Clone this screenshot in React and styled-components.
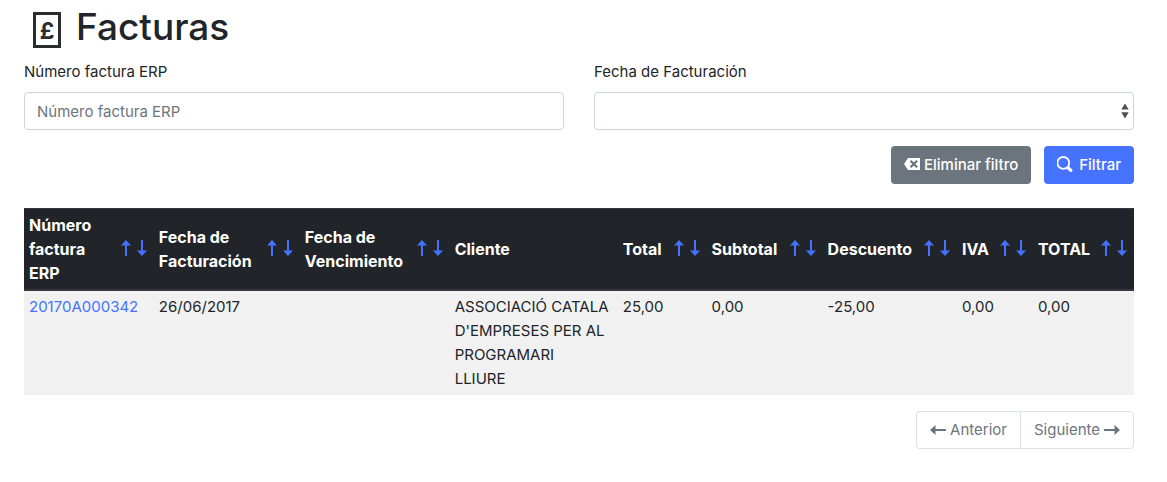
import React from 'react';

import styled, { createGlobalStyle } from 'styled-components';

const GlobalStyle = createGlobalStyle`
  *, *::before, *::after {
    box-sizing: border-box;
  }
  body {
    margin: 0;
    background: #fff;
    color: #212529;
    font-family: Inter, "Liberation Sans", sans-serif;
    font-size: 15px;
    line-height: 24px;
  }
  button, input, select {
    font: inherit;
    margin: 0;
  }
`;

const Page = styled.main`
  display: flex;
  flex-flow: column nowrap;
  padding: 3px 33px 32px 24px;
`;
const Header = styled.header`
  display: flex;
  align-items: center;
  gap: 15px;
  padding-left: 9px;
  & > svg {
    margin-top: 6px;
  }
`;
const Title = styled.h1`
  margin: 0;
  font-size: 37px;
  font-weight: 500;
  line-height: 48px;
`;
const Filters = styled.form`
  display: grid;
  grid-template-columns: 1fr 1fr;
  gap: 16px 30px;
  padding-top: 9px;
`;
const Field = styled.div`
  display: flex;
  flex-flow: column nowrap;
  gap: 8px;
`;
const Input = styled.input`
  width: 100%;
  height: 38px;
  padding: 6px 12px;
  background: #fff;
  border: 1px solid #ced4da;
  border-radius: 4px;
  color: #495057;
  &::placeholder {
    color: #6c757d;
    opacity: 1;
  }
`;
const SelectBox = styled.div`
  display: grid;
  align-items: center;
  & > * {
    grid-area: 1 / 1;
  }
  & > svg {
    justify-self: end;
    margin-right: 5px;
    pointer-events: none;
  }
`;
const Select = styled.select`
  appearance: none;
  width: 100%;
  height: 38px;
  padding: 6px 28px 6px 12px;
  background: #fff;
  border: 1px solid #ced4da;
  border-radius: 4px;
  color: #495057;
`;
const Actions = styled.div`
  grid-column: 1 / -1;
  display: flex;
  justify-content: flex-end;
  gap: 13px;
`;
const Button = styled.button`
  display: flex;
  align-items: center;
  gap: ${({ $gap }) => $gap};
  height: 38px;
  padding: 0 13px;
  background: ${({ $color }) => $color};
  border: 0;
  border-radius: 4px;
  color: #fff;
  font-weight: 500;
  cursor: pointer;
`;
const Table = styled.table`
  width: 100%;
  margin-top: 24px;
  border-collapse: separate;
  border-spacing: 0;
  table-layout: fixed;
`;
const Col = styled.col`
  width: ${({ $width }) => $width};
`;
const Th = styled.th`
  padding: 4px 4px 4px 5px;
  background: #212529;
  border-top: 1px solid #32383e;
  border-bottom: 2px solid #32383e;
  color: #fff;
  font-size: 16px;
  font-weight: 700;
  text-align: left;
`;
const Heading = styled.div`
  display: flex;
  align-items: center;
  justify-content: space-between;
  gap: 8px;
`;
const Sort = styled.span`
  display: flex;
  flex: none;
  padding-bottom: 2px;
`;
const SortLink = styled.a`
  display: flex;
  color: #4573ff;
`;
const Td = styled.td`
  padding: 4px 4px 4px 5px;
  background: #f1f1f1;
  vertical-align: top;
  white-space: pre-line;
`;
const Link = styled.a`
  color: #4573ff;
  text-decoration: none;
`;
const Pagination = styled.nav`
  display: flex;
  justify-content: flex-end;
  margin-top: 16px;
`;
const PageButton = styled.button`
  display: flex;
  align-items: center;
  gap: 4px;
  height: 38px;
  padding: 0 13px;
  background: #fff;
  border: 1px solid #dee2e6;
  color: #6c757d;
  &:first-child {
    border-right: 0;
    border-radius: 4px 0 0 4px;
  }
  &:last-child {
    border-radius: 0 4px 4px 0;
  }
`;

const InvoiceIcon = () => (
  <svg width="28" height="36" viewBox="0 0 28 36" aria-hidden="true">
    <rect x="1.5" y="1.5" width="25" height="33" fill="none" stroke="#2b2d30" strokeWidth="3" />
    <text x="14" y="26.5" textAnchor="middle" fontSize="23" fontWeight="700" fill="#2b2d30">£</text>
  </svg>
);

const SelectArrows = () => (
  <svg width="8" height="16" viewBox="0 0 8 16" fill="#495057" aria-hidden="true">
    <path d="M4 .5L7.7 6.6H.3zM4 15.5L.3 9.2h7.4z" />
  </svg>
);

const ClearIcon = () => (
  <svg width="16" height="14" viewBox="0 0 16 14" aria-hidden="true">
    <path d="M4 0h12v12H4L0 6z" fill="#fff" />
    <path d="M6.5 2.7l6.6 6.6M13.1 2.7L6.5 9.3" stroke="#6c757d" strokeWidth="2.2" />
  </svg>
);

const SearchIcon = () => (
  <svg width="17" height="18" viewBox="0 0 17 18" fill="none" stroke="#fff" aria-hidden="true">
    <circle cx="6.3" cy="6.9" r="5.9" strokeWidth="1.8" />
    <path d="M11.5 12.2l2.4 2.2" strokeWidth="3.2" strokeLinecap="round" />
  </svg>
);

const ARROWS = {
  up: 'M8 0l5 5.5H9V16H7V5.5H3z',
  down: 'M8 16l5-5.5H9V0H7v10.5H3z',
  left: 'M0 8l5.5-5v4H16v2H5.5v4z',
  right: 'M16 8l-5.5-5v4H0v2h10.5v4z',
};

const Arrow = ({ direction }) => (
  <svg width="16" height="16" viewBox="0 0 16 16" fill="currentColor" aria-hidden="true">
    <path d={ARROWS[direction]} />
  </svg>
);

const columns = [
  { label: 'Número factura ERP', width: '11.7%', sortable: true },
  { label: 'Fecha de Facturación', width: '13.15%', sortable: true },
  { label: 'Fecha de Vencimiento', width: '13.5%', sortable: true },
  { label: 'Cliente', width: '15.15%' },
  { label: 'Total', width: '8%', sortable: true },
  { label: 'Subtotal', width: '10.45%', sortable: true },
  { label: 'Descuento', width: '12.1%', sortable: true },
  { label: 'IVA', width: '6.85%', sortable: true },
  { label: 'TOTAL', width: '9.1%', sortable: true },
];

const invoices = [
  {
    number: '20170A000342',
    values: ['26/06/2017', '', "ASSOCIACIÓ CATALA D'EMPRESES PER AL PROGRAMARI\nLLIURE", '25,00', '0,00', '-25,00', '0,00', '0,00'],
  },
];

const App = () => (
  <Page>
    <GlobalStyle />
    <Header>
      <InvoiceIcon />
      <Title>Facturas</Title>
    </Header>
    <Filters onSubmit={(e) => e.preventDefault()}>
      <Field>
        <label htmlFor="number">Número factura ERP</label>
        <Input id="number" type="text" placeholder="Número factura ERP" />
      </Field>
      <Field>
        <label htmlFor="date">Fecha de Facturación</label>
        <SelectBox>
          <Select id="date" defaultValue="">
            <option value="" />
          </Select>
          <SelectArrows />
        </SelectBox>
      </Field>
      <Actions>
        <Button type="reset" $color="#6c757d" $gap="4px">
          <ClearIcon />
          Eliminar filtro
        </Button>
        <Button type="submit" $color="#4573ff" $gap="5px">
          <SearchIcon />
          Filtrar
        </Button>
      </Actions>
    </Filters>
    <Table>
      <colgroup>
        {columns.map(({ label, width }) => <Col key={label} $width={width} />)}
      </colgroup>
      <thead>
        <tr>
          {columns.map(({ label, sortable }) => (
            <Th key={label} scope="col">
              <Heading>
                {label}
                {sortable && (
                  <Sort>
                    <SortLink href="#asc" aria-label={`${label} ascendente`}><Arrow direction="up" /></SortLink>
                    <SortLink href="#desc" aria-label={`${label} descendente`}><Arrow direction="down" /></SortLink>
                  </Sort>
                )}
              </Heading>
            </Th>
          ))}
        </tr>
      </thead>
      <tbody>
        {invoices.map(({ number, values }) => (
          <tr key={number}>
            <Td><Link href={`#${number}`}>{number}</Link></Td>
            {values.map((value, i) => <Td key={columns[i + 1].label}>{value}</Td>)}
          </tr>
        ))}
      </tbody>
    </Table>
    <Pagination aria-label="Páginas">
      <PageButton type="button" disabled>
        <Arrow direction="left" />
        Anterior
      </PageButton>
      <PageButton type="button" disabled>
        Siguiente
        <Arrow direction="right" />
      </PageButton>
    </Pagination>
  </Page>
);

export default App;
